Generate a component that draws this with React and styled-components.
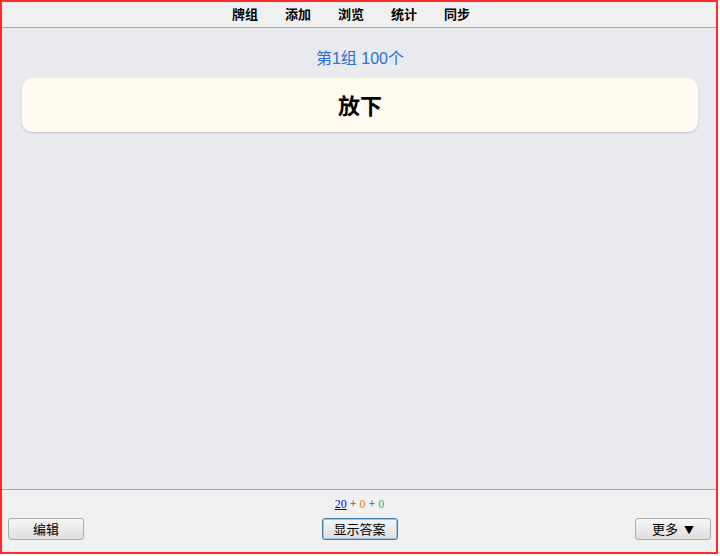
import styled, { createGlobalStyle } from "styled-components";

const GlobalStyle = createGlobalStyle`
  html, body {
    margin: 0;
    padding: 0;
    background: #fff;
  }
  body {
    font-family: "Liberation Sans", "Noto Sans CJK SC", sans-serif;
  }
`;

const navItems = ["牌组", "添加", "浏览", "统计", "同步"];

function App() {
  return (
    <>
      <GlobalStyle />
      <Frame>
        <TopBar>
          {navItems.map((item) => (
            <NavLink key={item}>{item}</NavLink>
          ))}
        </TopBar>
        <Main>
          <DeckTitle>第1组 100个</DeckTitle>
          <Card>放下</Card>
        </Main>
        <BottomBar>
          <Counts>
            <NewCount href="#">20</NewCount>
            <Plus> + </Plus>
            <LearnCount>0</LearnCount>
            <Plus> + </Plus>
            <ReviewCount>0</ReviewCount>
          </Counts>
          <ButtonRow>
            <Button>编辑</Button>
            <Button $focused>显示答案</Button>
            <Button>
              更多<Arrow>▼</Arrow>
            </Button>
          </ButtonRow>
        </BottomBar>
      </Frame>
    </>
  );
}

const Frame = styled.div`
  box-sizing: border-box;
  width: 718px;
  height: 554px;
  border: 2px solid #ff2b2b;
  display: flex;
  flex-direction: column;
  background: #e9eaee;
`;

const TopBar = styled.div`
  box-sizing: border-box;
  height: 26px;
  background: #f0f0f0;
  border-bottom: 1px solid #a9a9a9;
  display: flex;
  justify-content: center;
  align-items: center;
  gap: 27px;
  padding: 0 16px 3px 0;
`;

const NavLink = styled.span`
  font-family: "Noto Sans CJK SC", sans-serif;
  font-size: 13px;
  font-weight: 700;
  color: #000;
  width: 26px;
  text-align: center;
  line-height: 1;
`;

const Main = styled.div`
  flex: 1;
  padding: 20px 18px 0 20px;
  display: flex;
  flex-direction: column;
  align-items: stretch;
`;

const DeckTitle = styled.div`
  font-family: "Liberation Sans", "Noto Sans CJK SC", sans-serif;
  font-size: 16px;
  color: #2e6fd1;
  text-align: center;
  line-height: 22px;
  height: 22px;
  margin-bottom: 8px;
`;

const Card = styled.div`
  box-sizing: border-box;
  height: 54px;
  padding-bottom: 3px;
  background: #fffbf1;
  border-radius: 10px;
  box-shadow: 0 1px 2px rgba(0, 0, 0, 0.18);
  display: flex;
  align-items: center;
  justify-content: center;
  font-family: "Noto Sans CJK SC", sans-serif;
  font-size: 22px;
  font-weight: 700;
  color: #000;
`;

const BottomBar = styled.div`
  height: 63px;
  background: #f0f0f0;
  border-top: 1px solid #a9a9a9;
  display: flex;
  flex-direction: column;
  padding: 6px 5px 0 6px;
  box-sizing: border-box;
`;

const Counts = styled.div`
  font-family: "Liberation Serif", serif;
  font-size: 12px;
  text-align: center;
  line-height: 16px;
  height: 16px;
  margin-bottom: 6px;
`;

const NewCount = styled.a`
  color: #0000ee;
  text-decoration: underline;
`;

const Plus = styled.span`
  color: #333;
`;

const LearnCount = styled.span`
  color: #e8800f;
`;

const ReviewCount = styled.span`
  color: #10b090;
`;

const ButtonRow = styled.div`
  display: flex;
  justify-content: space-between;
  align-items: center;
`;

const Button = styled.button`
  width: 76px;
  height: 22px;
  padding: 0;
  font-family: "Noto Sans CJK SC", sans-serif;
  font-size: 13px;
  color: #000;
  background: linear-gradient(#f6f6f6, #dedede);
  border: 1px solid ${(p) => (p.$focused ? "#3c7fb1" : "#adadad")};
  border-radius: 3px;
  box-shadow: ${(p) => (p.$focused ? "inset 0 0 0 1px #9cc4e4" : "none")};
  line-height: 20px;
`;

const Arrow = styled.span`
  font-size: 10px;
  margin-left: 6px;
`;

export default App;
